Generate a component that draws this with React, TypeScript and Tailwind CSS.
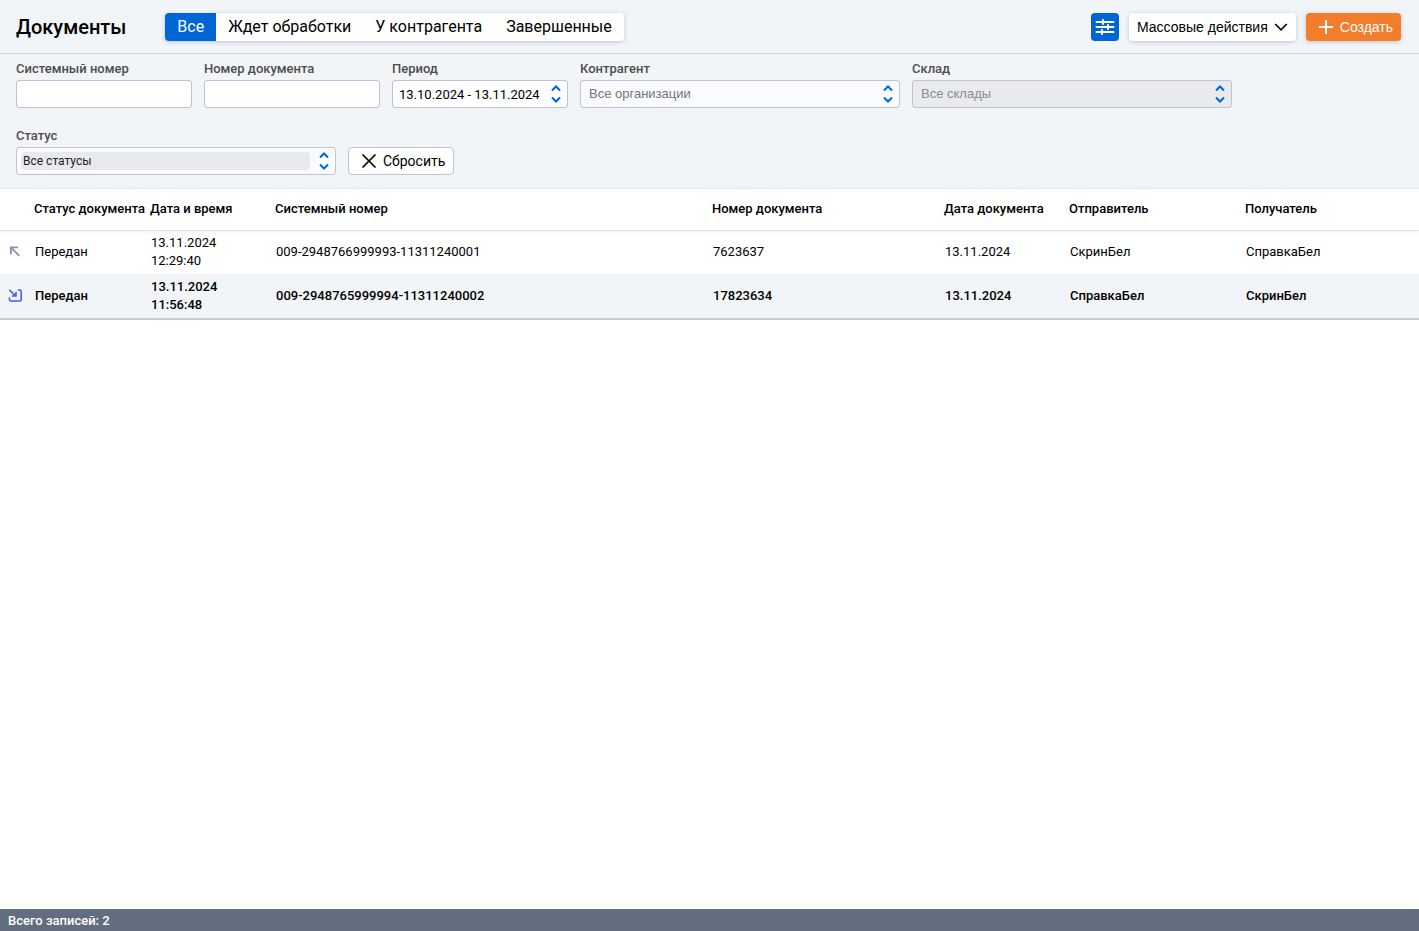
import React, { useState } from "react";

const TABS = ["Все", "Ждет обработки", "У контрагента", "Завершенные"];

type Doc = {
  direction: "out" | "in";
  status: string;
  date: string;
  time: string;
  system: string;
  number: string;
  docDate: string;
  sender: string;
  receiver: string;
};

const DOCS: Doc[] = [
  {
    direction: "out",
    status: "Передан",
    date: "13.11.2024",
    time: "12:29:40",
    system: "009-2948766999993-11311240001",
    number: "7623637",
    docDate: "13.11.2024",
    sender: "СкринБел",
    receiver: "СправкаБел",
  },
  {
    direction: "in",
    status: "Передан",
    date: "13.11.2024",
    time: "11:56:48",
    system: "009-2948765999994-11311240002",
    number: "17823634",
    docDate: "13.11.2024",
    sender: "СправкаБел",
    receiver: "СкринБел",
  },
];

function UpDownIcon() {
  return (
    <svg
      className="pointer-events-none absolute top-0 right-[7px] h-full w-[10px]"
      viewBox="0 0 10 28"
      fill="none"
      stroke="#0066d6"
      strokeWidth="2"
      aria-hidden="true"
    >
      <path d="M1 10.5 5 6.5 9 10.5M1 17.5 5 21.5 9 17.5" />
    </svg>
  );
}

function SlidersIcon() {
  return (
    <svg className="size-5" viewBox="0 0 20 20" fill="none" stroke="#fff" strokeWidth="2" strokeLinecap="round" aria-hidden="true">
      <path d="M1.5 5h17M1.5 10h17M1.5 15h17M8 3v4M13 8v4M7 13v4" />
    </svg>
  );
}

function OutgoingIcon() {
  return (
    <svg className="size-3.5" viewBox="0 0 14 14" fill="none" stroke="#8b93ac" strokeWidth="1.8" aria-hidden="true">
      <path d="M2.9 9.2V2.4H10M3 2.5l8.3 8.3" />
    </svg>
  );
}

function IncomingIcon() {
  return (
    <svg className="size-3.5" viewBox="0 0 14 14" fill="none" stroke="#4a5ee6" strokeWidth="1.6" aria-hidden="true">
      <path d="M1.3.8l6.4 6M8 2.8V7H3.8M9.8 1h2.4l1 1v9l-1 1H2.5l-1-1V8.4" />
    </svg>
  );
}

function Field({ id, label, wide, children }: { id: string; label: string; wide?: boolean; children: React.ReactNode }) {
  return (
    <div className={wide ? "w-80" : "w-44"}>
      <label htmlFor={id} className="block pb-[3px] text-[13px] leading-4 font-medium text-[#4d4d4d]">
        {label}
      </label>
      <div className="relative">{children}</div>
    </div>
  );
}

const TH = "px-1 text-left font-medium whitespace-nowrap";
const TD = "pr-1 pl-[5px]";

export default function App() {
  const [tab, setTab] = useState(TABS[0]);
  const [period, setPeriod] = useState("13.10.2024 - 13.11.2024");

  return (
    <div className="flex min-h-screen flex-col bg-white font-[Roboto,sans-serif] text-[13px] text-black">
      <header className="flex items-center border-b border-[#d0d6da] bg-[#f2f5f7] pt-[13px] pr-[18px] pb-3 pl-4">
        <h1 className="mr-[39px] text-xl leading-7 font-medium">Документы</h1>
        <nav className="flex overflow-hidden rounded bg-white shadow-[0_1px_4px_rgba(60,80,150,0.3)]">
          {TABS.map((name) => (
            <button
              key={name}
              type="button"
              onClick={() => setTab(name)}
              className={
                name === tab
                  ? "h-7 bg-[#0066d6] px-3 text-base leading-7 text-white"
                  : "h-7 px-3 text-base leading-7"
              }
            >
              {name}
            </button>
          ))}
        </nav>
        <div className="ml-auto flex gap-[10px] font-['Liberation_Sans',sans-serif]">
          <button type="button" aria-label="Фильтры" className="flex size-7 items-center justify-center rounded bg-[#0066d6]">
            <SlidersIcon />
          </button>
          <button type="button" className="flex h-7 items-center gap-1.5 rounded bg-white px-2 text-sm shadow-[0_1px_4px_rgba(60,80,150,0.3)]">
            Массовые действия
            <svg className="h-2 w-3.5" viewBox="0 0 14 8" fill="none" stroke="#000" strokeWidth="1.6" aria-hidden="true">
              <path d="M1.2 1 7 6.8 12.8 1" />
            </svg>
          </button>
          <button type="button" className="flex h-7 items-center gap-1.5 rounded bg-[#f27d2a] pr-2 pl-3 text-sm text-white shadow-[0_1px_4px_rgba(60,80,150,0.3)]">
            <svg className="size-4" viewBox="0 0 16 16" fill="none" stroke="#fff" strokeWidth="2" aria-hidden="true">
              <path d="M8 1v14M1 8h14" />
            </svg>
            Создать
          </button>
        </div>
      </header>

      <form className="flex flex-wrap items-end gap-x-3 gap-y-5 border-b border-[#e4e7eb] bg-[#f2f5f7] pt-[7px] pr-4 pb-[13px] pl-4">
        <Field id="system" label="Системный номер">
          <input id="system" className="block h-7 w-full rounded-[3px] border border-[#c0c3d2] bg-white px-1.5 text-[13px]" />
        </Field>
        <Field id="number" label="Номер документа">
          <input id="number" className="block h-7 w-full rounded-[3px] border border-[#c0c3d2] bg-white px-1.5 text-[13px]" />
        </Field>
        <Field id="period" label="Период">
          <input
            id="period"
            value={period}
            onChange={(e) => setPeriod(e.target.value)}
            className="block h-7 w-full rounded-[3px] border border-[#c0c3d2] bg-white pr-5 pl-1.5 text-[13px]"
          />
          <UpDownIcon />
        </Field>
        <Field id="partner" label="Контрагент" wide>
          <select id="partner" className="block h-7 w-full appearance-none rounded-[3px] border border-[#c0c3d2] bg-[#fafbfe] px-2 font-['Liberation_Sans',sans-serif] text-[13px] text-[#757575]">
            <option>Все организации</option>
          </select>
          <UpDownIcon />
        </Field>
        <Field id="warehouse" label="Склад" wide>
          <select id="warehouse" disabled className="block h-7 w-full appearance-none rounded-[3px] border border-[#c0c3d2] bg-[#e9eaee] px-2 font-['Liberation_Sans',sans-serif] text-[13px] text-[#8c8c8c] opacity-100">
            <option>Все склады</option>
          </select>
          <UpDownIcon />
        </Field>
        <Field id="status" label="Статус" wide>
          <div className="flex h-7 items-center rounded-[3px] border border-[#c0c3d2] bg-[#fafbfe] pr-[25px] pl-1">
            <select id="status" className="h-[18px] w-full appearance-none rounded-sm bg-[#e9eaee] px-0.5 text-xs text-[#222]">
              <option>Все статусы</option>
            </select>
          </div>
          <UpDownIcon />
        </Field>
        <button type="reset" className="flex h-7 items-center gap-1.5 rounded border border-[#c0c3d2] bg-white pr-2 pl-3 text-sm">
          <svg className="size-4" viewBox="0 0 16 16" fill="none" stroke="#000" strokeWidth="1.7" aria-hidden="true">
            <path d="M1.5 1.5l13 13M14.5 1.5l-13 13" />
          </svg>
          Сбросить
        </button>
      </form>

      <main className="flex-1">
        <table className="w-full table-fixed border-collapse leading-[18px]">
          <colgroup>
            <col className="w-[30px]" />
            <col className="w-[116px]" />
            <col className="w-[125px]" />
            <col />
            <col className="w-[232px]" />
            <col className="w-[125px]" />
            <col className="w-[176px]" />
            <col className="w-[178px]" />
          </colgroup>
          <thead>
            <tr className="h-[41px] border-b border-[#dfe4ea] shadow-[0_2px_4px_rgba(120,140,170,0.12)]">
              <th aria-label="Направление" />
              <th className={TH}>Статус документа</th>
              <th className={TH}>Дата и время</th>
              <th className={TH}>Системный номер</th>
              <th className={TH}>Номер документа</th>
              <th className={TH}>Дата документа</th>
              <th className={TH}>Отправитель</th>
              <th className={TH}>Получатель</th>
            </tr>
          </thead>
          <tbody>
            {DOCS.map((doc) => (
              <tr
                key={doc.system}
                className={
                  doc.direction === "in"
                    ? "h-[45px] border-b-2 border-[#c9ccd3] bg-[#f2f5f7] font-medium"
                    : "h-11"
                }
              >
                <td className="pl-2">{doc.direction === "in" ? <IncomingIcon /> : <OutgoingIcon />}</td>
                <td className={TD}>{doc.status}</td>
                <td className={TD}>
                  {doc.date}
                  <br />
                  {doc.time}
                </td>
                <td className={TD}>{doc.system}</td>
                <td className={TD}>{doc.number}</td>
                <td className={TD}>{doc.docDate}</td>
                <td className={TD}>{doc.sender}</td>
                <td className={TD}>{doc.receiver}</td>
              </tr>
            ))}
          </tbody>
        </table>
      </main>

      <footer className="bg-[#636d80] px-2 pt-[3px] pb-px leading-[18px] font-medium text-white">Всего записей: 2</footer>
    </div>
  );
}
